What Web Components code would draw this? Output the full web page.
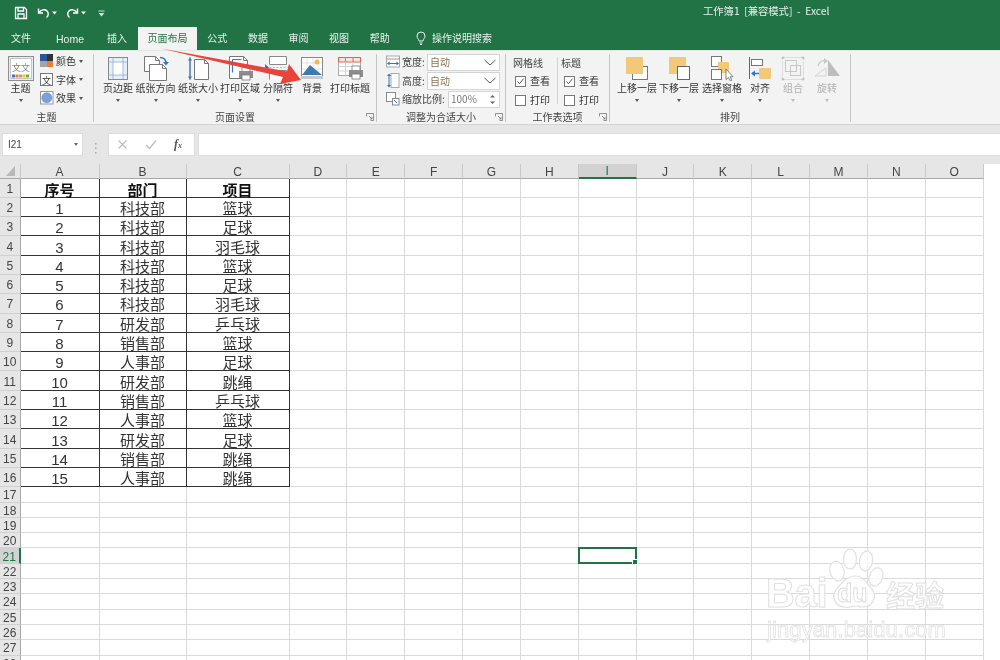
<!DOCTYPE html>
<html lang="zh"><head><meta charset="utf-8"><title>Excel</title>
<style>
html,body{margin:0;padding:0;background:#fff}
body{font-family:"Noto Sans CJK SC","Liberation Sans",sans-serif}
</style></head><body>
<x-app></x-app>
<script>
const FONT='"Noto Sans CJK SC","Liberation Sans",sans-serif';
function def(name,css,html,extra){
  const C=class extends HTMLElement{
    constructor(){super();this.attachShadow({mode:'open'});}
    connectedCallback(){
      const s=this.shadowRoot;
      if(s.childNodes.length)return;
      s.innerHTML='<style>'+css+'</style>'+(typeof html==='function'?html(this):html);
      if(extra)extra(this);
    }
  };
  customElements.define(name,C);
}
const attr=(e,a,d='')=>e.getAttribute(a)??d;

/* ---------- title bar ---------- */
def('x-titlebar',`
:host{display:flex;align-items:center;height:26px;background:#217346;color:#e8f1ec;font-size:10px;line-height:14px;flex:none}
.q{display:flex;align-items:center;padding-left:14px}
.q svg{display:block}
.title{margin-left:598px;white-space:pre;width:140px;font-size:10.300px;position:relative;top:-2px}
`,`<div class="q">
<svg width="14" height="14" viewBox="0 0 14 14" fill="none" stroke="#fff" stroke-width="1.3"><path d="M1.5 1.5h9l2 2v9h-11z"/><path d="M4 1.5v3.5h5.5v-3.5M4 12.5v-4.5h6v4.5"/></svg>
<svg style="margin-left:9px" width="13" height="14" viewBox="0 0 13 14" fill="none" stroke="#fff" stroke-width="1.4"><path d="M2 6.500c2-3 6-3.500 8-1.500s1.500 5-.5 6.500"/><path d="M1.500 2.500v4.500h4.500" /></svg>
<svg style="margin-left:2px" width="5" height="4" viewBox="0 0 5 4"><path d="M0 .5h5L2.500 3.500z" fill="#fff"/></svg>
<svg style="margin-left:9px" width="13" height="14" viewBox="0 0 13 14" fill="none" stroke="#fff" stroke-width="1.400"><path d="M11 6.500c-2-3-6-3.500-8-1.500s-1.500 5 .5 6.500"/><path d="M11.500 2.500v4.500h-4.500"/></svg>
<svg style="margin-left:2px" width="5" height="4" viewBox="0 0 5 4"><path d="M0 .5h5L2.500 3.500z" fill="#fff"/></svg>
<svg style="margin-left:12px" width="7" height="7" viewBox="0 0 7 7" fill="none"><path d="M.5 1h6" stroke="#cfe0d6"/><path d="M.5 3h6L3.500 6.500z" fill="#cfe0d6"/></svg>
</div><div class="title" id="t">工作簿1  [兼容模式]  -  Excel</div>`);

/* ---------- tabs ---------- */
def('x-tabs',`
:host{display:flex;align-items:stretch;height:24px;background:#217346;color:#eaf3ee;font-size:10px;line-height:14px;flex:none}
div{display:flex;align-items:center;padding:0 10.3px 1px;white-space:nowrap}
.on{background:#f3f3f3;color:#217346;padding:0 10px 1px;margin-top:1px;width:39px;justify-content:center}
.home{padding:1px 11px 0 15px;font-family:"Liberation Sans",sans-serif;font-size:10.500px;width:29px}
.ins{padding:0 11px 1px}
.file{padding-left:11px;padding-right:10px}
svg{display:block;margin-left:16px;margin-right:6px;align-self:center}
.s{padding:0 0 1px}
`,`<div class="file">文件</div><div class="home">Home</div><div class="ins">插入</div><div class="on">页面布局</div><div>公式</div><div>数据</div><div>审阅</div><div>视图</div><div>帮助</div>
<svg width="10" height="14" viewBox="0 0 10 14" fill="none" stroke="#eaf3ee"><path d="M3 10C3 8 1 7.500 1 5a4 4 0 0 1 8 0c0 2.500-2 3-2 5z"/><path d="M3.500 12h3M4 13.500h2"/></svg>
<div class="s">操作说明搜索</div>`);

/* ---------- ribbon parts ---------- */
def('x-rb',`
:host{display:flex;flex-direction:column;align-items:center;flex:none;font-size:10px;line-height:14px;color:#333;white-space:nowrap}
:host([off]){color:#b0b0b0}
.i{height:27px;display:flex;justify-content:center}
.l{height:14px}
.c{height:10px;display:flex;align-items:center}
.c i{display:block;border:2.500px solid transparent;border-top:3px solid #555;border-bottom:0}
:host([off]) .c i{border-top-color:#bbb}
`,e=>`<div class="i"><slot></slot></div><div class="l">${attr(e,'label')}</div><div class="c">${e.hasAttribute('dd')?'<i></i>':''}</div>`,
e=>{e.style.width=attr(e,'w')+'px';});

def('x-group',`
:host{display:flex;flex-direction:column;flex:none;box-sizing:border-box;border-right:1px solid #c6c6c6;margin:3px 0 3px;height:68px}
.b{height:56px;display:flex;flex:none}
.f{display:grid;grid-template-columns:1fr auto 1fr;align-items:center;height:14px;margin-top:0;font-size:10px;line-height:14px;color:#444;white-space:nowrap}
.f span{grid-column:2}
.f svg{grid-column:3;justify-self:end;margin-right:2px;display:block}
`,e=>`<div class="b" style="padding-left:${attr(e,'pl','0')}px"><slot></slot></div><div class="f"><span>${attr(e,'label')}</span>${e.hasAttribute('launch')?'<svg width="8" height="8" viewBox="0 0 8 8" fill="none" stroke="#777" stroke-width=".8"><path d="M.5 3.500v-3h7v7h-3"/><path d="M3 3l3 3M6 4v2h-2"/></svg>':''}</div>`,
e=>{e.style.width=attr(e,'w')+'px';});

def('x-check',`
:host{display:flex;align-items:center;height:18.500px;font-size:10px;line-height:14px;color:#333;white-space:nowrap}
b{display:block;box-sizing:border-box;width:11px;height:11px;border:1px solid #777;background:#fff;margin-right:4px;position:relative}
svg{display:block}
`,e=>`<b>${e.hasAttribute('on')?'<svg width="9" height="9" viewBox="0 0 9 9" fill="none" stroke="#555"><path d="M1.500 4.500l2 2.200 4-5"/></svg>':''}</b>${attr(e,'label')}`);

def('x-field',`
:host{display:flex;align-items:center;height:18.500px;font-size:10px;line-height:14px;color:#444;white-space:nowrap}
.ic{width:15px;height:16px;flex:none;display:flex;align-items:center}
.lb{flex:1;padding-left:1px}
.box{box-sizing:border-box;height:17.500px;background:#fff;border:1px solid #d4d4d4;display:flex;align-items:center;justify-content:space-between;padding:0 3px 0 2px;color:#8a7350;font-size:10px;flex:none}
.box.n{color:#777}
`,e=>`<div class="ic"><slot></slot></div><div class="lb">${attr(e,'label')}</div><div class="box ${e.hasAttribute('spin')?'n':''}" style="width:${attr(e,'bw')}px"><span>${attr(e,'value')}</span>${e.hasAttribute('spin')
?'<svg width="7" height="13" viewBox="0 0 7 13"><path d="M1 4.500L3.500 2 6 4.500zM1 8.500L3.500 11 6 8.500z" fill="#666"/></svg>'
:'<svg width="12" height="7" viewBox="0 0 12 7" fill="none" stroke="#555"><path d="M.5 1l5.500 5 5.500-5"/></svg>'}</div>`);

const IC=(b)=>`<svg width="28" height="27" viewBox="0 0 28 27" fill="none">${b}</svg>`;
const printer=(x,y)=>`<g transform="translate(${x} ${y})"><rect x="3" y="0" width="8" height="5" fill="#fff" stroke="#777" stroke-width=".8"/><rect x="0" y="4" width="14" height="7" fill="#8c8c8c"/><rect x="3" y="8" width="8" height="5" fill="#fff" stroke="#777" stroke-width=".8"/></g>`;
const doc=(x,y,w,h,f=4)=>`<path d="M${x}.5 ${y}.5h${w-f}l${f} ${f}v${h-f}h-${w}z" fill="#fff" stroke="#777"/><path d="M${x+w-f}.5 ${y}.5v${f}h${f}" stroke="#777"/>`;

def('x-ribbon',`
:host{display:flex;background:#f3f3f3;border-top:1px solid #dfe8e2;box-sizing:content-box;flex:none;height:73px;color:#333}
.col{display:flex;flex-direction:column;font-size:10px;line-height:14px}
.sm{display:flex;align-items:center;height:18.500px;white-space:nowrap;color:#333}
.sm svg{display:block;margin-right:2px;flex:none}
.sm i{display:block;border:2.500px solid transparent;border-top:3px solid #555;border-bottom:0;margin-left:3px}
.g1{margin-left:4px;margin-top:-2px}
.ws{display:grid;grid-template-columns:41px 1px auto;column-gap:3px;}
.ws .t{height:18.500px;display:flex;align-items:center;font-size:10px;color:#444}
.ws .sep{grid-column:2;grid-row:1/4;background:#d4d4d4;margin:4px 0 6px}
.ws .c2{grid-column:3}
.fit{display:flex;flex-direction:column;width:114px;margin-top:-1px}
svg{display:block}
text{font-family:${FONT}}
`,`
<x-group w="94" label="主题">
  <x-rb w="31" style="margin-left:5px" label="主题" dd>${`<svg width="28" height="27" viewBox="0 0 28 27"><rect x="1.500" y="2.500" width="25" height="24" fill="#e7edf5" stroke="#8f8f8f"/><rect x="3.500" y="4.500" width="21" height="20" fill="#fff" stroke="#c5c5c5"/><text x="5" y="17" font-size="9" fill="#7a8a55">文</text><text x="14" y="17" font-size="9" fill="#6b87ad">文</text><g><rect x="5" y="20.500" width="3" height="3" fill="#4472c4"/><rect x="8.500" y="20.500" width="3" height="3" fill="#ed7d31"/><rect x="12" y="20.500" width="3" height="3" fill="#a5a5a5"/><rect x="15.500" y="20.500" width="3" height="3" fill="#ffc000"/><rect x="19" y="20.500" width="3" height="3" fill="#70ad47"/></g></svg>`}</x-rb>
  <div class="col g1">
   <div class="sm"><svg width="14" height="14" viewBox="0 0 14 14"><rect width="7" height="7" x="0" y="0" fill="#2f5597"/><rect width="6" height="7" x="7" y="0" fill="#333"/><rect width="7" height="6" x="0" y="7" fill="#a5a5a5"/><rect width="6" height="6" x="7" y="7" fill="#ed7d31"/></svg>颜色<i></i></div>
   <div class="sm"><svg width="14" height="14" viewBox="0 0 14 14"><rect x=".5" y=".5" width="12" height="12" fill="#fff" stroke="#777"/><text x="2" y="10.500" font-size="9" fill="#333">文</text></svg>字体<i></i></div>
   <div class="sm"><svg width="14" height="14" viewBox="0 0 14 14"><rect x=".5" y=".5" width="12.500" height="12.500" fill="#fff" stroke="#999"/><circle cx="6.800" cy="6.800" r="5" fill="#7ba0dc" stroke="#5a7fc0" stroke-width=".6"/></svg>效果<i></i></div>
  </div>
</x-group>

<x-group w="283" pl="7" label="页面设置" launch>
 <x-rb w="34" label="页边距" dd>${IC(`<rect x="4.500" y="3.500" width="19" height="22" fill="#fff" stroke="#888"/><rect x="5" y="4" width="18" height="4" fill="#e6eef8"/><rect x="5" y="21" width="18" height="4" fill="#e6eef8"/><rect x="5" y="4" width="4" height="21" fill="#e6eef8"/><rect x="19" y="4" width="4" height="21" fill="#e6eef8"/><path d="M9 3.500v22M19 3.500v22M4.500 8h19M4.500 21h19" stroke="#7ea6d6" stroke-width=".7"/>`)}</x-rb>
 <x-rb w="41" label="纸张方向" dd>${IC(`${doc(2,2,15,15)}${doc(7,10,17,16)}<path d="M18 3.500c4 0 6 2 6 6" stroke="#2b78c5" stroke-width="1.400"/><path d="M21 8l3 3.500 3-3.500z" fill="#2b78c5"/>`)}</x-rb>
 <x-rb w="44" label="纸张大小" dd>${IC(`${doc(10,5,14,20)}<path d="M6 3v23" stroke="#888"/><path d="M4 6.500l2-3 2 3zM4 22.500l2 3 2-3z" fill="#2b78c5"/><path d="M6 6v17" stroke="#2b78c5"/>`)}</x-rb>
 <x-rb w="40" label="打印区域" dd>${IC(`${doc(3,2,18,22)}<path d="M6.500 5.500v13M6.500 5.500h9" stroke="#2b78c5" stroke-width="1.200"/>${printer(13,13)}`)}</x-rb>
 <x-rb w="36" label="分隔符" dd>${IC(`<path d="M5.500 2.500h17v8h-17z" fill="#fff" stroke="#888"/><path d="M5.500 25.500v-9h17v9" fill="#fff" stroke="#888"/><path d="M1 10l4 3.500-4 3.500z" fill="#2b78c5"/><path d="M5.500 13.500h18" stroke="#bbb" stroke-dasharray="2 1.500"/>`)}</x-rb>
 <x-rb w="32" label="背景">${IC(`<rect x="3.500" y="3.500" width="21" height="19" fill="#fff" stroke="#888"/><rect x="3" y="22" width="22" height="3" fill="#c9c9c9"/><path d="M9 4v18M15 4v18M20 4v18M4 9h20M4 15h20" stroke="#d5d5d5" stroke-width=".6"/><circle cx="19" cy="8" r="2.500" fill="#f0b955"/><path d="M4 21l8-10 12 10z" fill="#3f79b5"/>`)}</x-rb>
 <x-rb w="44" label="打印标题">${IC(`<rect x="2.500" y="3.500" width="22" height="18" fill="#fff" stroke="#aaa"/><path d="M2.500 3.500h22v4.500h-22z" fill="#fbe3dc" stroke="#e0634a"/><path d="M2.500 12.500h22M2.500 17h16M9.500 3.500v18M17 3.500v10" stroke="#c4c4c4" stroke-width=".7"/><path d="M9.500 3.500v4.500M17 3.500v4.500" stroke="#e0634a" stroke-width=".8"/>${printer(13,12)}`)}</x-rb>
</x-group>

<x-group w="129" pl="9" label="调整为合适大小" launch>
 <div class="fit">
  <x-field label="宽度:" value="自动" bw="73"><svg width="14" height="14" viewBox="0 0 14 14" fill="none"><rect x=".5" y="1" width="13" height="11" fill="#fff" stroke="#aaa"/><path d="M0 4h14" stroke="#999"/><path d="M2 8.500h10" stroke="#2b78c5"/><path d="M1 8.500l2.500-2v4zM13 8.500l-2.500-2v4z" fill="#2b78c5"/></svg></x-field>
  <x-field label="高度:" value="自动" bw="73"><svg width="14" height="15" viewBox="0 0 14 15" fill="none"><rect x="5" y=".5" width="8" height="14" fill="#fff" stroke="#aaa"/><path d="M3 2v11" stroke="#2b78c5"/><path d="M3 .5l2 2.500h-4zM3 14.500l2-2.500h-4z" fill="#2b78c5"/></svg></x-field>
  <x-field label="缩放比例:" value="100%" bw="52" spin><svg width="14" height="14" viewBox="0 0 14 14" fill="none"><rect x=".5" y=".5" width="9" height="9" fill="#fff" stroke="#888"/><rect x="6.500" y="6.500" width="6.500" height="6.500" fill="#fff" stroke="#888"/><path d="M8 8l3 3" stroke="#2b78c5"/></svg></x-field>
 </div>
</x-group>

<x-group w="104" pl="7" label="工作表选项" launch>
 <div class="ws" style="margin-top:-1px">
  <div class="t" style="grid-column:1">网格线</div><div class="sep"></div><div class="t c2">标题</div>
  <x-check style="grid-column:1;margin-left:2px" on label="查看"></x-check><x-check class="c2" style="margin-left:3px" on label="查看"></x-check>
  <x-check style="grid-column:1;margin-left:2px" label="打印"></x-check><x-check class="c2" style="margin-left:3px" label="打印"></x-check>
 </div>
</x-group>

<x-group w="241" pl="6" label="排列">
 <x-rb w="42" label="上移一层" dd>${IC(`<rect x="9.500" y="12.500" width="15" height="13" fill="#fff" stroke="#777"/><rect x="3" y="3" width="17" height="17" fill="#f2c879"/>`)}</x-rb>
 <x-rb w="42" label="下移一层" dd>${IC(`<rect x="4" y="3" width="17" height="17" fill="#f2c879"/><rect x="12.500" y="12.500" width="12" height="13" fill="#fff" stroke="#666"/>`)}</x-rb>
 <x-rb w="44" label="选择窗格" dd>${IC(`<rect x="3.500" y="2.500" width="10" height="10" fill="#fff" stroke="#777"/><rect x="10" y="8" width="11" height="11" fill="#f2c879"/><rect x="3.500" y="15.500" width="10" height="10" fill="#fff" stroke="#777"/><path d="M18 15v10.500l2.500-2 1.800 3.500 1.500-.7-1.700-3.500h3z" fill="#fff" stroke="#666" stroke-width=".8"/>`)}</x-rb>
 <x-rb w="32" label="对齐" dd>${IC(`<path d="M3.500 3v22" stroke="#666"/><rect x="5.500" y="5.500" width="11" height="6" fill="#fff" stroke="#777"/><rect x="13" y="14" width="12" height="11" fill="#f2c879"/><path d="M6 19.500h7" stroke="#2b78c5" stroke-width="1.500"/><path d="M5 19.500l4-3v6z" fill="#2b78c5"/>`)}</x-rb>
 <x-rb w="34" off label="组合" dd>${IC(`<path d="M3.500 5.500v-2h2M22.500 3.500h2v2M3.500 23.500v2h2M24.500 23.500v2h-2" stroke="#bbb" stroke-width="1.500"/><path d="M3.500 7v15M6 3.500h16M24.500 7v15M6 25.500h16" stroke="#ddd"/><rect x="6.500" y="6.500" width="11" height="11" fill="#f3f3f3" stroke="#c8c8c8"/><rect x="11.500" y="11.500" width="10" height="10" fill="none" stroke="#c8c8c8"/>`)}</x-rb>
 <x-rb w="34" off label="旋转" dd>${IC(`<path d="M15 6L27 22H15z" fill="#bdbdbd"/><path d="M2 22l11-8v8z" fill="#f3f3f3" stroke="#d2d2d2"/><path d="M5 12c1-4 4-6 8-5" stroke="#c8c8c8" stroke-width="1.300"/><path d="M11 4l4 3-4 3z" fill="#c8c8c8"/>`)}</x-rb>
</x-group>
`);

/* ---------- formula bar ---------- */
def('x-formula',`
:host{display:flex;align-items:flex-start;height:40px;background:#e6e6e6;border-top:1px solid #d4d4d4;box-sizing:border-box;padding-top:8px;padding-left:2px;flex:none;font-size:10px;line-height:14px;color:#444}
.box{background:#fff;border:1px solid #dcdcdc;box-sizing:border-box;height:23px;display:flex;align-items:center}
.name{width:81px;justify-content:space-between;padding:0 4px 0 5px;font-family:"Liberation Sans",sans-serif;font-size:10px}
.name i{display:block;border:2.500px solid transparent;border-top:3px solid #666;border-bottom:0}
.dots{width:25px;display:flex;justify-content:center;align-self:center}
.fx{width:87px;padding:0 0 0 8px;gap:17px}
.input{flex:1;margin-left:3px;border-right:0}
svg{display:block}
em{font-family:"Liberation Serif",serif;font-style:italic;font-size:12px;color:#555;font-weight:bold}
sub{font-size:8px;vertical-align:baseline}
`,`<div class="box name"><span>I21</span><i></i></div>
<div class="dots"><svg width="3" height="11" viewBox="0 0 3 11" fill="#aaa"><rect y="0" x="1" width="1.500" height="1.500"/><rect y="4.500" x="1" width="1.500" height="1.500"/><rect y="9" x="1" width="1.500" height="1.500"/></svg></div>
<div class="box fx"><svg width="11" height="11" viewBox="0 0 11 11" stroke="#bdbdbd" stroke-width="1.200" fill="none"><path d="M1.500 1.500l8 8M9.500 1.500l-8 8"/></svg><svg width="12" height="11" viewBox="0 0 12 11" stroke="#bdbdbd" stroke-width="1.300" fill="none"><path d="M1 6l3.500 3.500L11 1.500"/></svg><em>f<sub>x</sub></em></div>
<div class="box input"></div>`);

/* ---------- sheet ---------- */
const DATA=[['序号','部门','项目'],[1,'科技部','篮球'],[2,'科技部','足球'],[3,'科技部','羽毛球'],[4,'科技部','篮球'],[5,'科技部','足球'],[6,'科技部','羽毛球'],[7,'研发部','乒乓球'],[8,'销售部','篮球'],[9,'人事部','足球'],[10,'研发部','跳绳'],[11,'销售部','乒乓球'],[12,'人事部','篮球'],[13,'研发部','足球'],[14,'销售部','跳绳'],[15,'人事部','跳绳']];
def('x-sheet',`
:host{display:grid;flex:1;min-height:0;overflow:hidden;background:#fff;grid-template-columns:20.500px 79px 87px 103px repeat(12,57.850px);grid-template-rows:14.500px repeat(16,19.300px) repeat(12,15.300px);font-family:"Liberation Sans",${FONT}}
div{box-sizing:border-box;display:flex;align-items:center;justify-content:center;white-space:nowrap}
.h{background:#e6e6e6;color:#444;font-size:12px;line-height:14px}
.ch{border-right:1px solid #c9c9c9;border-bottom:1px solid #a8a8a8;padding-top:2px}
.rh{border-right:1px solid #a8a8a8;border-bottom:1px solid #d0d0d0;padding-top:2px;line-height:12px}
.c{border-right:1px solid #dadada;border-bottom:1px solid #dadada}
.t{border-right:1px solid #333;border-bottom:1px solid #333;font-size:15px;line-height:17px;padding-top:3px;color:#333;font-family:"Liberation Sans",${FONT}}
.b{font-weight:bold;color:#111;font-family:${FONT}}
.sc{background:#d2d2d2;border-bottom:2px solid #217346;color:#217346}
.sr{background:#d2d2d2;border-right:2px solid #217346;color:#217346}
.hold{position:relative}
.sel{position:absolute;left:-1px;top:-1px;right:-1px;bottom:-1px;border:2px solid #217346}
.sel i{position:absolute;right:-3px;bottom:-3px;background:#217346;border:1px solid #fff;box-sizing:border-box;width:6px;height:6px}
svg{display:block;margin:1px 0 0 1px}
`,()=>{
  let h='<div class="h ch" style="padding:0"><svg width="9" height="10" viewBox="0 0 9 10"><path d="M9 0v10H0z" fill="#b8b8b8"/></svg></div>';
  const cols='ABCDEFGHIJKLMNO';
  for(const l of cols) h+=`<div class="h ch ${l==='I'?'sc':''}">${l}</div>`;
  for(let r=1;r<=28;r++){
    h+=`<div class="h rh ${r===21?'sr':''}">${r}</div>`;
    for(let c=0;c<15;c++){
      if(r<=16&&c<3) h+=`<div class="t ${r===1?'b':''}">${DATA[r-1][c]}</div>`;
      else if(r===21&&c===8) h+='<div class="c hold"><div class="sel"><i></i></div></div>';
      else h+='<div class="c"></div>';
    }
  }
  return h;
});

/* ---------- overlays ---------- */
def('x-arrow',`
:host{position:absolute;left:155px;top:42px;width:155px;height:50px;display:block;pointer-events:none}
svg{display:block}
`,`<svg width="155" height="50" viewBox="0 0 155 50"><path d="M6 6.500L132 29.500 134 22 146 38 125 42 128 35z" fill="#e8443a"/></svg>`);

def('x-watermark',`
:host{position:absolute;left:760px;top:545px;width:195px;height:100px;display:block;pointer-events:none;font-family:"Liberation Sans",sans-serif}
.row{display:flex;align-items:flex-end;height:66px}
.bai,.cn,.url{color:rgba(255,255,255,.85);-webkit-text-stroke:1px #e0e0e0}
.bai{font-weight:bold;font-size:40px;line-height:36px;margin-left:6px;letter-spacing:-.3px;width:62px}
.paw{position:relative;width:56px;height:64px;flex:none}
.paw svg{display:block}
.du{position:absolute;left:9px;top:34px;font-size:25px;line-height:24px;font-weight:bold;color:rgba(255,255,255,.8);-webkit-text-stroke:.8px #dadada}
.cn{font-family:"Noto Sans CJK SC",sans-serif;font-weight:bold;font-size:29px;line-height:34px;margin-left:2px}
.url{font-size:22px;line-height:26px;margin:6px 0 0 7px;white-space:nowrap;-webkit-text-stroke:.8px #e2e2e2;letter-spacing:.1px}
`,`<div class="row"><div class="bai">Bai</div><div class="paw"><svg width="56" height="64" viewBox="0 0 56 64" fill="rgba(255,255,255,.75)" stroke="#e0e0e0" stroke-width="1.200"><ellipse cx="9" cy="24" rx="7" ry="10" transform="rotate(-15 9 24)"/><ellipse cx="22" cy="12" rx="6.500" ry="10"/><ellipse cx="38" cy="14" rx="6.500" ry="10" transform="rotate(10 38 14)"/><ellipse cx="48" cy="30" rx="6.500" ry="9.500" transform="rotate(20 48 30)"/><path d="M28 29c8 0 11 8 16 13 5 6 2 18-9 18-4 0-5-1-8-1s-5 2-10 1C7 60 3 50 8 43c5-6 10-14 20-14z"/></svg><div class="du">du</div></div><div class="cn">经验</div></div><div class="url">jingyan.baidu.com</div>`);

/* ---------- app ---------- */
def('x-app',`
:host{display:flex;flex-direction:column;position:relative;width:1000px;height:660px;overflow:hidden;background:#fff;font-family:${FONT};filter:blur(.3px)}
`,`<x-titlebar></x-titlebar><x-tabs></x-tabs><x-ribbon></x-ribbon><x-formula></x-formula><x-sheet></x-sheet><x-arrow></x-arrow><x-watermark></x-watermark>`);
</script>
</body></html>
